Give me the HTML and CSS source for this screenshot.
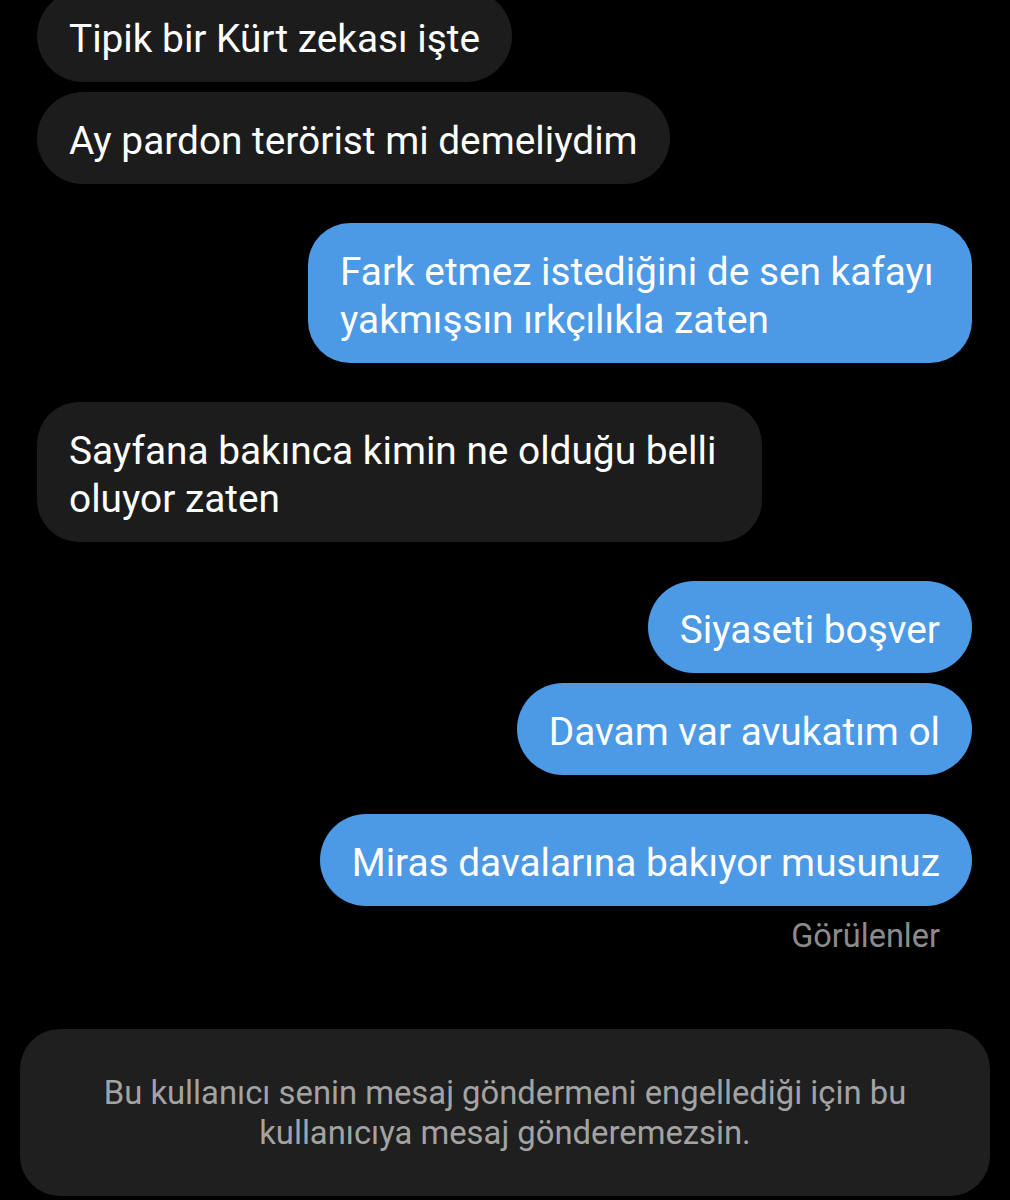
FILE: index.html
```html
<!DOCTYPE html>
<html lang="tr">
<head>
  <meta charset="UTF-8" />
  <meta name="viewport" content="width=device-width, initial-scale=1.0"/>
  <title>Mesajlar</title>
  <link rel="stylesheet" href="styles.css">
</head>
<body>
  <div class="thread">
    <div class="msg msg-in first">Tipik bir Kürt zekası işte</div>
    <div class="msg msg-in tight">Ay pardon terörist mi demeliydim</div>

    <div class="msg msg-out wrap-out">Fark etmez istediğini de sen kafayı yakmışsın ırkçılıkla zaten</div>

    <div class="msg msg-in wrap-in">Sayfana bakınca kimin ne olduğu belli oluyor zaten</div>

    <div class="msg msg-out">Siyaseti boşver</div>
    <div class="msg msg-out tight">Davam var avukatım ol</div>

    <div class="msg msg-out">Miras davalarına bakıyor musunuz</div>
    <div class="seen">Görülenler</div>
  </div>

  <div class="blocked">
    Bu kullanıcı senin mesaj göndermeni engellediği için bu<br>
    kullanıcıya mesaj gönderemezsin.
  </div>
</body>
</html>
```

FILE: styles.css
```css
* {
  margin: 0;
  padding: 0;
  box-sizing: border-box;
}

body {
  background: #000;
  font-family: 'Roboto', 'Noto Sans', sans-serif;
  color: #fff;
  width: 1010px;
  height: 1200px;
  overflow: hidden;
}

/* Chat thread */
.thread {
  display: flex;
  flex-direction: column;
  padding: 0 38px 0 37px;
  margin-top: -10px;
}

.msg {
  font-size: 38.8px;
  line-height: 48px;
  padding: 25px 32px 19px;
  border-radius: 46px;
  margin-top: 39px;
}

.msg.first {
  margin-top: 0;
}

.msg.tight {
  margin-top: 10px;
}

.msg-in {
  align-self: flex-start;
  background: #1c1c1c;
}

.msg-out {
  align-self: flex-end;
  background: #4c99e6;
}

.wrap-out {
  width: 664px;
  border-radius: 42px;
}

.wrap-in {
  width: 725px;
  border-radius: 42px;
}

.seen {
  align-self: flex-end;
  margin-right: 32px;
  margin-top: 13px;
  font-size: 32.5px;
  line-height: 34px;
  color: #8b8b8b;
}

/* Blocked notice */
.blocked {
  margin: 76px 20px 0;
  height: 167px;
  background: #1f1f1f;
  border-radius: 40px;
  display: flex;
  align-items: center;
  justify-content: center;
  text-align: center;
  font-size: 32.8px;
  line-height: 40px;
  color: #a3a3a3;
}
```
